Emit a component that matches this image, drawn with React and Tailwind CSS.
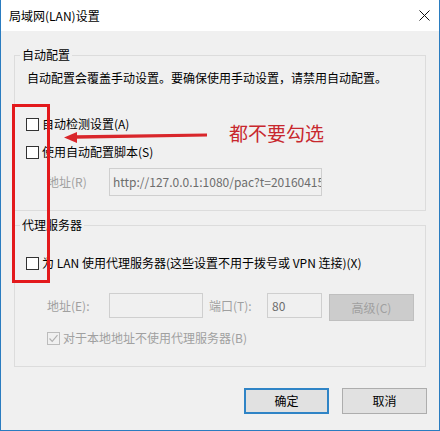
import React from "react";

const font = { fontFamily: '"Noto Sans CJK SC", "Noto Sans", sans-serif' };

function Box({ checked = false, disabled = false }) {
  return (
    <span
      className={
        "flex h-[13px] w-[13px] shrink-0 items-center justify-center border " +
        (disabled ? "border-[#bcbcbc] bg-[#f0f0f0]" : "border-[#333333] bg-white")
      }
    >
      {checked && (
        <svg width="11" height="11" viewBox="0 0 11 11">
          <path d="M1.5 5.5 L4.2 8.3 L9.5 2.2" fill="none" stroke="#b0b0b0" strokeWidth="1.2" />
        </svg>
      )}
    </span>
  );
}

export default function App() {
  return (
    <div
      className="relative flex h-[431px] w-[440px] flex-col border-x border-b border-[#2a7cc0] bg-[#f0f0f0] text-[12px] leading-[16px] text-black"
      style={font}
    >
      {/* title bar */}
      <div className="flex h-[31px] shrink-0 items-center justify-between bg-white pl-[8px] pr-[9px]">
        <span className="text-[12px]">局域网(LAN)设置</span>
        <svg width="11" height="11" viewBox="0 0 11 11">
          <path d="M0.5 0.5 L10.5 10.5 M10.5 0.5 L0.5 10.5" stroke="#111" strokeWidth="1" />
        </svg>
      </div>

      {/* group 1 */}
      <fieldset className="mx-[13px] mt-[16px] border border-[#dcdcdc] px-[5px] pb-[14px]">
        <legend className="px-[2px] leading-[16px]">自动配置</legend>
        <div className="ml-[7px] mt-[7px]">自动配置会覆盖手动设置。要确保使用手动设置，请禁用自动配置。</div>
        <div className="ml-[6px] mt-[30px] flex h-[16px] items-center gap-[3px]">
          <Box />
          <span>自动检测设置(A)</span>
        </div>
        <div className="ml-[6px] mt-[12px] flex h-[16px] items-center gap-[3px]">
          <Box />
          <span>使用自动配置脚本(S)</span>
        </div>
        <div className="ml-[27px] mt-[8px] flex items-center">
          <span className="w-[62px] text-[#a0a0a0]">地址(R)</span>
          <div className="flex h-[28px] w-[213px] items-center overflow-hidden whitespace-nowrap border border-[#cfcfcf] bg-[#f0f0f0] pl-[3px] text-[#6d6d6d]">
            http://127.0.0.1:1080/pac?t=201604151234
          </div>
        </div>
      </fieldset>

      {/* group 2 */}
      <fieldset className="mx-[13px] mt-[6px] border border-[#dcdcdc] px-[5px] pb-[20px]">
        <legend className="px-[2px] leading-[16px]">代理服务器</legend>
        <div className="ml-[6px] mt-[22px] flex h-[16px] items-center gap-[3px]">
          <Box />
          <span className="whitespace-nowrap">为 LAN 使用代理服务器(这些设置不用于拨号或 VPN 连接)(X)</span>
        </div>
        <div className="ml-[27px] mt-[22px] flex items-start">
          <span className="flex h-[25px] w-[62px] items-center text-[#a0a0a0]">地址(E):</span>
          <div className="h-[25px] w-[94px] border border-[#cfcfcf] bg-[#f0f0f0]" />
          <span className="ml-[6px] flex h-[25px] w-[58px] items-center text-[#a0a0a0]">端口(T):</span>
          <div className="flex h-[25px] w-[55px] items-center border border-[#cfcfcf] bg-[#f0f0f0] pl-[4px] text-[#6d6d6d]">
            80
          </div>
          <div className="ml-[7px] mt-px flex h-[27px] w-[85px] items-center justify-center border border-[#bfbfbf] bg-[#cccccc] text-[#a0a0a0]">
            高级(C)
          </div>
        </div>
        <div className="ml-[27px] mt-[9px] flex h-[16px] items-center gap-[3px] text-[#a0a0a0]">
          <Box checked disabled />
          <span>对于本地地址不使用代理服务器(B)</span>
        </div>
      </fieldset>

      {/* buttons */}
      <div className="mr-[12px] mt-[21px] flex justify-end gap-[13px]">
        <div className="flex h-[26px] w-[85px] items-center justify-center border-2 border-[#2f84c6] bg-[#e1e1e1]">确定</div>
        <div className="flex h-[26px] w-[85px] items-center justify-center border border-[#adadad] bg-[#e1e1e1]">取消</div>
      </div>

      {/* red annotations */}
      <div className="absolute left-[11px] top-[104px] h-[179px] w-[38px] border-[3px] border-[#e3191c]" />
      <svg className="absolute left-[60px] top-[126px]" width="150" height="20" viewBox="0 0 150 20">
        <polygon points="146,7.5 146,10.5 14,12.8 14,9.2" fill="#d9262b" />
        <polygon points="3,11.5 16,6 16,17" fill="#d9262b" />
      </svg>
      <div className="absolute left-[228px] top-[121px] text-[19px] leading-[24px] text-[#c8282e]">都不要勾选</div>
    </div>
  );
}
